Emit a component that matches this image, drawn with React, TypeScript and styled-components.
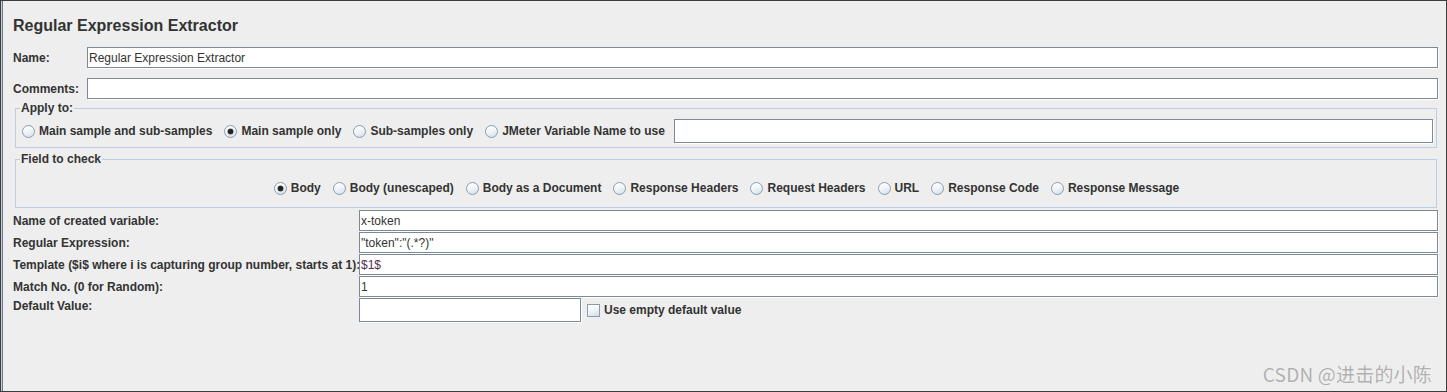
import React from "react";
import styled, { createGlobalStyle } from "styled-components";

const GlobalStyle = createGlobalStyle`
  html, body { margin: 0; padding: 0; background: #eeeeee; }
  body { font-family: "Liberation Sans", Arial, sans-serif; }
  *, *::before, *::after { box-sizing: border-box; }
`;

const Frame = styled.div`
  position: relative;
  width: 1447px;
  height: 392px;
  background: #eeeeee;
  border: 1px solid #3c3c3c;
  box-shadow: inset 1px 0 0 #c3ced9, inset 2px 0 0 #6b7b8b;
  overflow: hidden;
  color: #333333;
  font-family: "Liberation Sans", Arial, sans-serif;
  font-size: 12px;
`;

const Panel = styled.div`
  display: flex;
  flex-direction: column;
  padding: 15px 8px 0 12px;
`;

const Title = styled.h1`
  margin: 0;
  font-size: 16px;
  line-height: 20px;
  font-weight: bold;
  color: #333333;
`;

const FieldRow = styled.div<{ $top: number }>`
  display: flex;
  align-items: center;
  margin-top: ${(p) => p.$top}px;
`;

const RowLabel = styled.label<{ $width?: number }>`
  flex: 0 0 ${(p) => (p.$width ? `${p.$width}px` : "auto")};
  font-weight: bold;
  white-space: nowrap;
  color: #333333;
`;

const TextInput = styled.input<{ $width?: number; $height?: number; $color?: string; $shift?: number }>`
  flex: ${(p) => (p.$width ? `0 0 ${p.$width}px` : "1 1 auto")};
  width: ${(p) => (p.$width ? `${p.$width}px` : "auto")};
  min-width: 0;
  height: ${(p) => p.$height ?? 21}px;
  margin: 0 0 0 ${(p) => p.$shift ?? 0}px;
  padding: 0 1px;
  background: #ffffff;
  border: 1px solid #7a8a99;
  box-shadow: 1px 1px 0 #ffffff;
  border-radius: 0;
  outline: none;
  font-family: "Liberation Sans", Arial, sans-serif;
  font-size: 12px;
  color: ${(p) => p.$color ?? "#333333"};
`;

const Group = styled.fieldset<{ $top: number; $pad: string }>`
  margin: ${(p) => p.$top}px 1px 0 2px;
  padding: ${(p) => p.$pad};
  min-width: 0;
  border: 1px solid #b8cfe5;
`;

const GroupTitle = styled.legend`
  padding: 0 1px;
  margin: 0;
  font-weight: bold;
  font-size: 12px;
  line-height: 14px;
  color: #333333;
`;

const RadioRow = styled.div<{ $center?: boolean; $height: number; $pad: string }>`
  display: flex;
  align-items: center;
  justify-content: ${(p) => (p.$center ? "center" : "flex-start")};
  gap: 12px;
  height: ${(p) => p.$height}px;
  padding: ${(p) => p.$pad};
`;

const Choice = styled.label`
  display: flex;
  align-items: center;
  gap: 4px;
  font-weight: bold;
  white-space: nowrap;
  color: #333333;
`;

const RadioDot = styled.span<{ $checked?: boolean }>`
  position: relative;
  flex: 0 0 13px;
  width: 13px;
  height: 13px;
  border-radius: 50%;
  border: 1px solid #8a9db0;
  background: linear-gradient(160deg, #ffffff 0%, #f2f6fa 45%, #d3dde8 100%);
  &::after {
    content: "";
    display: ${(p) => (p.$checked ? "block" : "none")};
    position: absolute;
    left: 3px;
    top: 3px;
    width: 5px;
    height: 5px;
    border-radius: 50%;
    background: #222222;
    box-shadow: 0 0 0 0.5px #555;
  }
`;

const CheckBox = styled.span`
  flex: 0 0 13px;
  width: 13px;
  height: 13px;
  border: 1px solid #8a9db0;
  background: linear-gradient(160deg, #ffffff 0%, #f2f6fa 45%, #d3dde8 100%);
`;

const VarGrid = styled.div`
  display: grid;
  grid-template-columns: 346px 1fr;
  grid-auto-rows: 21px;
  row-gap: 1px;
  align-items: center;
  margin-top: 2px;
`;

const GridLabel = styled.label<{ $top?: boolean }>`
  align-self: ${(p) => (p.$top ? "start" : "center")};
  line-height: ${(p) => (p.$top ? "16px" : "14px")};
  font-weight: bold;
  white-space: nowrap;
  color: #333333;
`;

const DefaultRow = styled.div`
  display: flex;
  align-items: center;
  gap: 6px;
  height: 24px;
  align-self: start;
`;

const Watermark = styled.div`
  position: absolute;
  right: 14px;
  bottom: 6px;
  font-family: "Noto Sans CJK SC", "Noto Sans", sans-serif;
  font-size: 19px;
  line-height: 22px;
  color: #b0b0b0;
  text-shadow: 0 0 1px #ffffff;
  letter-spacing: 0.2px;
  pointer-events: none;
`;

const applyOptions = [
  { label: "Main sample and sub-samples", checked: false },
  { label: "Main sample only", checked: true },
  { label: "Sub-samples only", checked: false },
  { label: "JMeter Variable Name to use", checked: false },
];

const fieldOptions = [
  { label: "Body", checked: true },
  { label: "Body (unescaped)", checked: false },
  { label: "Body as a Document", checked: false },
  { label: "Response Headers", checked: false },
  { label: "Request Headers", checked: false },
  { label: "URL", checked: false },
  { label: "Response Code", checked: false },
  { label: "Response Message", checked: false },
];

const variables = [
  { label: "Name of created variable:", value: "x-token", color: "#333333" },
  { label: "Regular Expression:", value: "\"token\":\"(.*?)\"", color: "#333333" },
  { label: "Template ($i$ where i is capturing group number, starts at 1):", value: "$1$", color: "#4f2f55" },
  { label: "Match No. (0 for Random):", value: "1", color: "#2f3f2f" },
];

export default function App() {
  return (
    <>
      <GlobalStyle />
      <Frame>
        <Panel>
          <Title>Regular Expression Extractor</Title>
          <FieldRow $top={11}>
            <RowLabel $width={74}>Name:</RowLabel>
            <TextInput readOnly defaultValue="Regular Expression Extractor" />
          </FieldRow>
          <FieldRow $top={10}>
            <RowLabel $width={74}>Comments:</RowLabel>
            <TextInput readOnly defaultValue="" />
          </FieldRow>

          <Group $top={2} $pad="4px 3px 4px 4px">
            <GroupTitle>Apply to:</GroupTitle>
            <RadioRow $height={24} $pad="0 0 0 2px">
              {applyOptions.map((o) => (
                <Choice key={o.label}>
                  <RadioDot $checked={o.checked} />
                  {o.label}
                </Choice>
              ))}
              <TextInput readOnly defaultValue="" $height={24} $shift={-3} />
            </RadioRow>
          </Group>

          <Group $top={4} $pad="13px 3px 10px 4px">
            <GroupTitle>Field to check</GroupTitle>
            <RadioRow $center $height={18} $pad="0">
              {fieldOptions.map((o) => (
                <Choice key={o.label}>
                  <RadioDot $checked={o.checked} />
                  {o.label}
                </Choice>
              ))}
            </RadioRow>
          </Group>

          <VarGrid>
            {variables.map((v) => (
              <React.Fragment key={v.label}>
                <GridLabel>{v.label}</GridLabel>
                <TextInput readOnly defaultValue={v.value} $color={v.color} />
              </React.Fragment>
            ))}
            <GridLabel $top>Default Value:</GridLabel>
            <DefaultRow>
              <TextInput readOnly defaultValue="" $width={222} $height={24} />
              <Choice>
                <CheckBox />
                Use empty default value
              </Choice>
            </DefaultRow>
          </VarGrid>
        </Panel>
        <Watermark>CSDN @进击的小陈</Watermark>
      </Frame>
    </>
  );
}
